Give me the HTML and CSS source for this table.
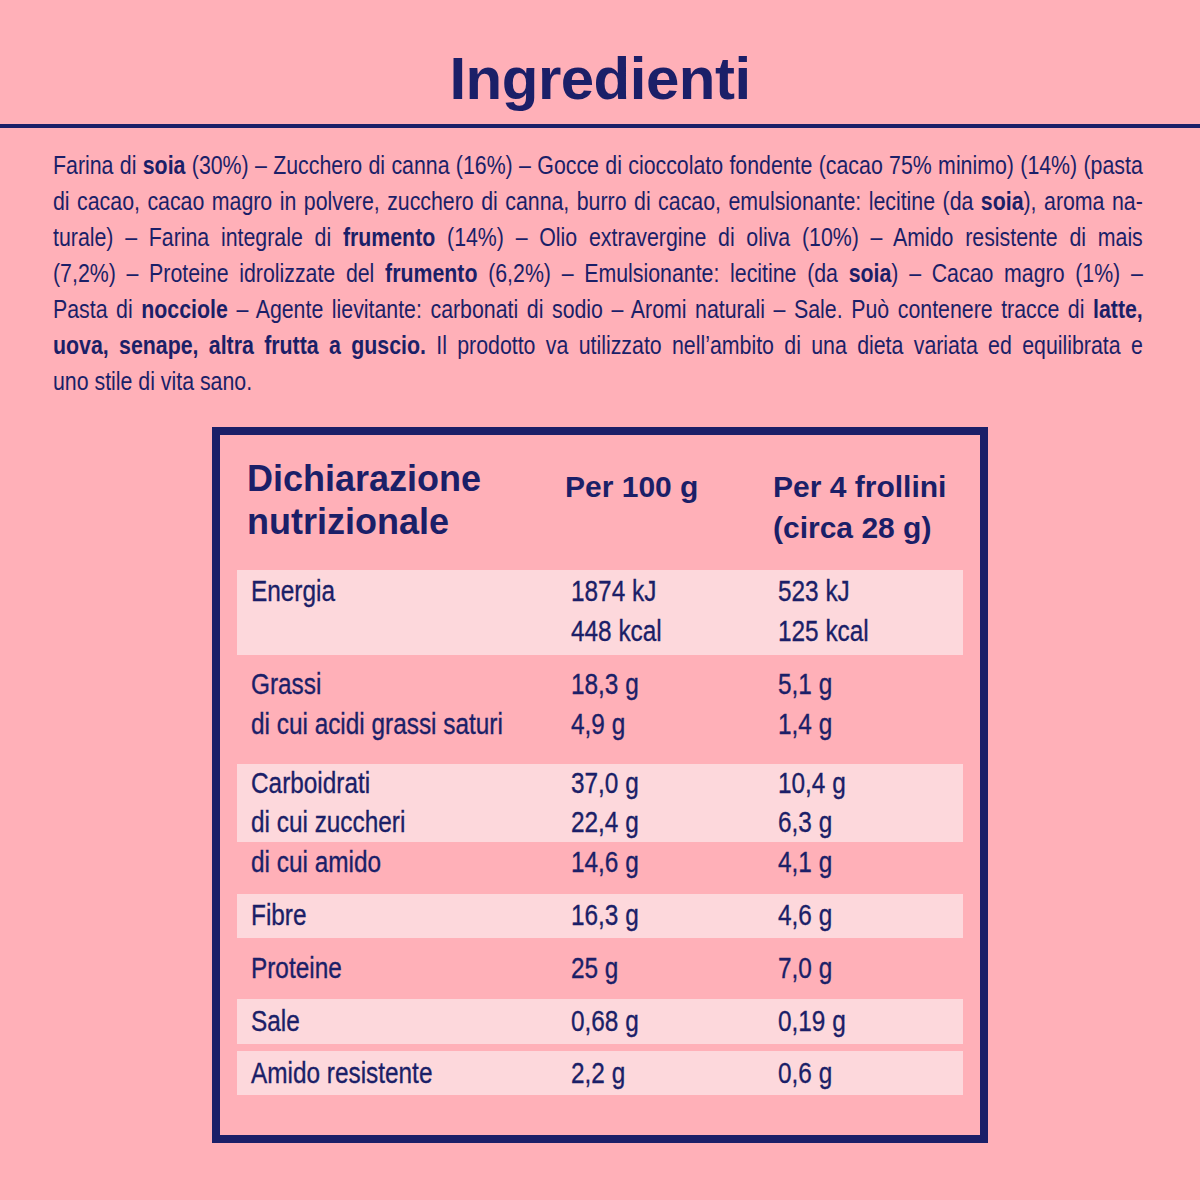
FILE: index.html
```html
<!DOCTYPE html>
<html lang="it">
<head>
<meta charset="utf-8">
<title>Ingredienti</title>
<link rel="stylesheet" href="styles.css">
</head>
<body>
<header class="top">
  <h1 class="title">Ingredienti</h1>
</header>
<div class="ingredients-wrap">
<p class="ingredients">
  <span class="line">Farina di <b>soia</b> (30%) – Zucchero di canna (16%) – Gocce di cioccolato fondente (cacao 75% minimo) (14%) (pasta</span>
  <span class="line">di cacao, cacao magro in polvere, zucchero di canna, burro di cacao, emulsionante: lecitine (da <b>soia</b>), aroma na-</span>
  <span class="line">turale) – Farina integrale di <b>frumento</b> (14%) – Olio extravergine di oliva (10%) – Amido resistente di mais</span>
  <span class="line">(7,2%) – Proteine idrolizzate del <b>frumento</b> (6,2%) – Emulsionante: lecitine (da <b>soia</b>) – Cacao magro (1%) –</span>
  <span class="line">Pasta di <b>nocciole</b> – Agente lievitante: carbonati di sodio – Aromi naturali – Sale. Può contenere tracce di <b>latte,</b></span>
  <span class="line"><b>uova, senape, altra frutta a guscio.</b> Il prodotto va utilizzato nell’ambito di una dieta variata ed equilibrata e</span>
  <span class="line last">uno stile di vita sano.</span>
</p>
</div>

<section class="panel">
  <div class="head">
    <div class="h-main">Dichiarazione<br>nutrizionale</div>
    <div class="h-col">Per 100 g</div>
    <div class="h-col">Per 4 frollini<br>(circa 28 g)</div>
  </div>

  <div class="row light r-energy">
    <div>Energia</div>
    <div>1874 kJ<br>448 kcal</div>
    <div>523 kJ<br>125 kcal</div>
  </div>
  <div class="row r-fat">
    <div>Grassi<br>di cui acidi grassi saturi</div>
    <div>18,3 g<br>4,9 g</div>
    <div>5,1 g<br>1,4 g</div>
  </div>
  <div class="row light r-carb">
    <div>Carboidrati<br>di cui zuccheri</div>
    <div>37,0 g<br>22,4 g</div>
    <div>10,4 g<br>6,3 g</div>
  </div>
  <div class="row r-starch">
    <div>di cui amido</div>
    <div>14,6 g</div>
    <div>4,1 g</div>
  </div>
  <div class="row light r-fibre">
    <div>Fibre</div>
    <div>16,3 g</div>
    <div>4,6 g</div>
  </div>
  <div class="row r-prot">
    <div>Proteine</div>
    <div>25 g</div>
    <div>7,0 g</div>
  </div>
  <div class="row light r-salt">
    <div>Sale</div>
    <div>0,68 g</div>
    <div>0,19 g</div>
  </div>
  <div class="row light r-res">
    <div>Amido resistente</div>
    <div>2,2 g</div>
    <div>0,6 g</div>
  </div>
</section>
</body>
</html>
```

FILE: styles.css
```css
* { box-sizing: border-box; }

html, body {
  margin: 0;
  padding: 0;
  background: #ffb0b8;
  color: #1b1f68;
}

body {
  width: 1200px;
  height: 1200px;
  overflow: hidden;
  font-family: "Liberation Sans", Arial, sans-serif;
}

.top {
  padding-top: 43px;
  border-bottom: 4px solid #1b1f68;
  padding-bottom: 9px;
}

.title {
  margin: 0;
  text-align: center;
  font-weight: 700;
  font-size: 60px;
  line-height: 72px;
  letter-spacing: -0.5px;
}

/* condensed body text: Liberation Sans narrowed like Arial Narrow */
.ingredients-wrap {
  margin: 19px 0 0 53px;
  width: 1090px;
  height: 252px;
}

.ingredients {
  margin: 0;
  width: 1329px;
  font-size: 26px;
  line-height: 36px;
  transform: scaleX(0.82);
  transform-origin: 0 0;
}

.ingredients b { font-weight: 700; }

.line {
  display: block;
  text-align: justify;
  text-align-last: justify;
  white-space: nowrap;
}

.line.last { text-align-last: left; }

.panel {
  margin: 28px 0 0 212px;
  width: 776px;
  height: 716px;
  border: 8px solid #1b1f68;
  padding: 22px 17px 0 17px;
}

.head {
  display: grid;
  grid-template-columns: 318px 208px 1fr;
  padding-left: 10px;
  font-weight: 700;
}

.h-main {
  font-size: 36px;
  line-height: 43px;
}

.h-col {
  font-size: 30px;
  line-height: 41px;
  padding-top: 9px;
}

.row {
  display: grid;
  grid-template-columns: 320px 207px 1fr;
  padding-left: 14px;
  font-size: 29px;
  line-height: 40px;
}

.row > div {
  transform: scaleX(0.84);
  transform-origin: 0 50%;
  white-space: nowrap;
  -webkit-text-stroke: 0.35px #1b1f68;
}

.light { background: #fdd8dc; }

.r-energy { margin-top: 22px; padding: 1px 0 4px 14px; }
.r-fat { padding: 9px 0 20px 14px; }
.r-carb { line-height: 39px; padding: 0 0 0 14px; }
.r-starch { padding: 0 0 12px 14px; }
.r-fibre { padding: 1px 0 3px 14px; }
.r-prot { padding: 10px 0 11px 14px; }
.r-salt { padding: 2px 0 3px 14px; }
.r-res { margin-top: 7px; padding: 2px 0 2px 14px; }
```
